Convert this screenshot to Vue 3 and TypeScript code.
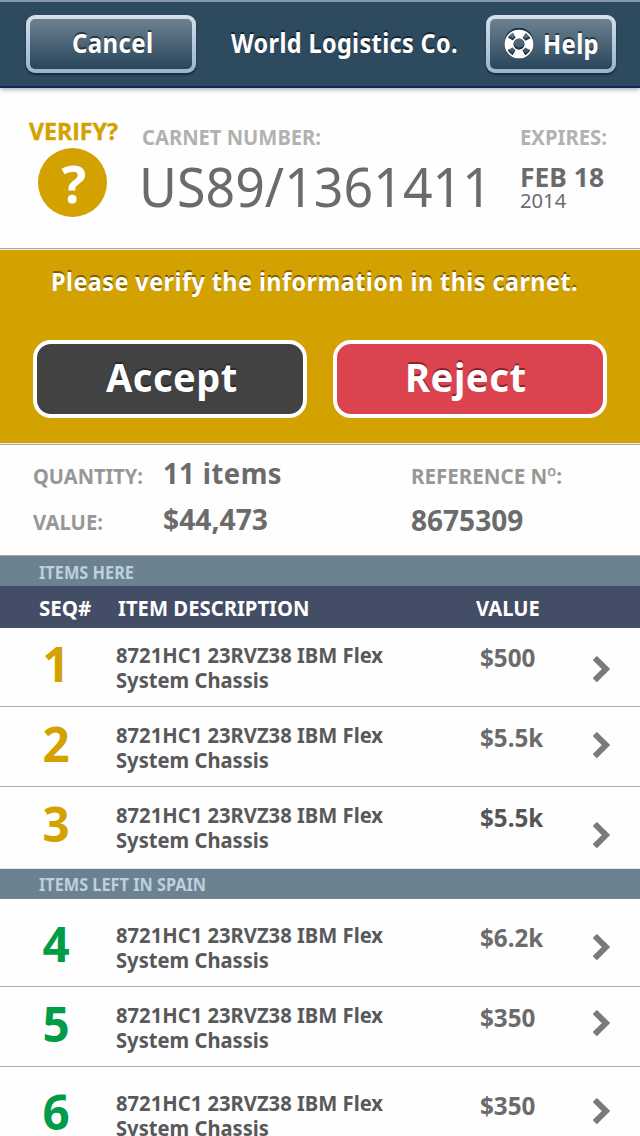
<script setup lang="ts">
interface Item {
  seq: number
  value: string
  width: number
  top: number
  height: number
  arrow: number
  strong?: boolean
}

interface Section {
  title: string
  width: number
  tone: string
  columns: boolean
  items: Item[]
}

const sections: Section[] = [
  {
    title: 'ITEMS HERE',
    width: 95,
    tone: 'gold',
    columns: true,
    items: [
      { seq: 1, value: '$500', width: 55.5, top: 15, height: 79, arrow: 28 },
      { seq: 2, value: '$5.5k', width: 63.3, top: 16, height: 80, arrow: 25 },
      { seq: 3, value: '$5.5k', width: 63.3, top: 16, height: 82, arrow: 35, strong: true },
    ],
  },
  {
    title: 'ITEMS LEFT IN SPAIN',
    width: 167,
    tone: 'green',
    columns: false,
    items: [
      { seq: 4, value: '$6.2k', width: 63.3, top: 24, height: 88, arrow: 35 },
      { seq: 5, value: '$350', width: 55.5, top: 16, height: 80, arrow: 23 },
      { seq: 6, value: '$350', width: 55.5, top: 24, height: 88, arrow: 31 },
    ],
  },
]

// Condenses a label horizontally so that it takes the given width.
const vFit = {
  mounted(el: HTMLElement, binding: { value: number }) {
    const natural = el.getBoundingClientRect().width
    el.style.transform = `scaleX(${binding.value / natural})`
    el.style.marginRight = `${binding.value - natural}px`
  },
}
</script>

<template>
  <div class="screen">
    <header class="bar">
      <button class="nav cancel"><span v-fit="81.5" class="t">Cancel</span></button>
      <h1 class="company"><span v-fit="227" class="t">World Logistics Co.</span></h1>
      <button class="nav help">
        <svg class="ring" viewBox="0 0 30 32" width="30" height="32">
          <g v-for="layer in ['shade', 'face']" :key="layer" :class="layer">
            <circle cx="15" cy="16" r="13.6" class="thin" />
            <circle cx="15" cy="16" r="6.4" class="thin" />
            <circle cx="15" cy="16" r="10" class="thick" />
          </g>
        </svg>
        <span v-fit="56" class="t">Help</span>
      </button>
    </header>

    <section class="carnet">
      <div class="status">
        <span v-fit="89" class="t verify">VERIFY?</span>
        <div class="badge"><span class="mark">?</span></div>
      </div>
      <div class="number">
        <div class="label"><span v-fit="179" class="t">CARNET NUMBER:</span></div>
        <div class="code"><span v-fit="353" class="t">US89/1361411</span></div>
      </div>
      <div class="expires">
        <div class="label"><span v-fit="87" class="t">EXPIRES:</span></div>
        <div class="day"><span v-fit="84" class="t">FEB 18</span></div>
        <div class="year"><span v-fit="46.2" class="t">2014</span></div>
      </div>
    </section>

    <section class="prompt">
      <p class="ask"><span v-fit="527" class="t">Please verify the information in this carnet.</span></p>
      <div class="actions">
        <button class="act accept"><span v-fit="131.7" class="t">Accept</span></button>
        <button class="act reject"><span v-fit="121.5" class="t">Reject</span></button>
      </div>
    </section>

    <section class="summary">
      <div class="key"><span v-fit="110" class="t">QUANTITY:</span></div>
      <div class="val spaced"><span v-fit="119" class="t">11 items</span></div>
      <div class="key ref"><span v-fit="151" class="t">REFERENCE N<span class="ord">º</span>:</span></div>
      <div class="key"><span v-fit="70" class="t">VALUE:</span></div>
      <div class="val"><span v-fit="105" class="t">$44,473</span></div>
      <div class="val refno"><span v-fit="112.3" class="t">8675309</span></div>
    </section>

    <section v-for="section in sections" :key="section.title" :class="section.tone">
      <h2 class="strip"><span v-fit="section.width" class="t">{{ section.title }}</span></h2>
      <div v-if="section.columns" class="columns">
        <div><span v-fit="52.3" class="t">SEQ#</span></div>
        <div><span v-fit="191.5" class="t">ITEM DESCRIPTION</span></div>
        <div><span v-fit="63.8" class="t">VALUE</span></div>
      </div>
      <div
        v-for="item in section.items"
        :key="item.seq"
        class="row"
        :style="{ height: item.height + 'px' }"
      >
        <div class="seq" :style="{ paddingTop: item.top + 'px' }">{{ item.seq }}</div>
        <div class="desc" :style="{ paddingTop: item.top + 'px' }">
          <span v-fit="267" class="t">8721HC1 23RVZ38 IBM Flex</span>
          <span v-fit="153" class="t">System Chassis</span>
        </div>
        <div class="price" :class="{ strong: item.strong }" :style="{ paddingTop: item.top + 'px' }">
          <span v-fit="item.width" class="t">{{ item.value }}</span>
        </div>
        <svg
          class="arrow"
          :style="{ marginTop: item.arrow + 'px' }"
          viewBox="0 0 18 27"
          width="18"
          height="27"
        >
          <path d="M1.8 2 L13 13.1 L1.8 24.2" />
        </svg>
      </div>
    </section>
  </div>
</template>

<style>
body {
  background: #fff;
}
</style>

<style scoped>
.screen {
  width: 640px;
  height: 1136px;
  overflow: hidden;
  background: #fefefe;
  font-family: 'Noto Sans', 'Open Sans', sans-serif;
  font-weight: 700;
  color: #6b6b6b;
}

h1,
h2,
p {
  margin: 0;
  font-size: inherit;
}

button {
  margin: 0;
  padding: 0;
  font: inherit;
  color: inherit;
  text-align: left;
}

.t {
  display: inline-block;
  white-space: nowrap;
  transform-origin: 0 50%;
}

.bar {
  position: relative;
  display: flex;
  align-items: flex-start;
  box-sizing: border-box;
  height: 88px;
  padding: 13px 24px 0 26px;
  border-top: 2px solid #8598a5;
  border-bottom: 2px solid #0e2a60;
  background: #2d4a5f;
  box-shadow: 0 1px 5px rgba(0, 0, 0, 0.4);
  font-size: 26px;
  line-height: 30px;
  letter-spacing: 0.4px;
  color: #fff;
  text-shadow: 0 -2px 0 rgba(0, 0, 0, 0.5);
}

.nav {
  display: flex;
  align-items: flex-start;
  box-sizing: border-box;
  height: 58px;
  border: 4px solid transparent;
  border-radius: 9px;
  background:
    linear-gradient(#6d8291, #29455a) padding-box,
    linear-gradient(#d6e0eb, #94b5d1) border-box;
  box-shadow: 0 2px 2px rgba(0, 0, 0, 0.45);
  letter-spacing: 0.4px;
  line-height: 30px;
  text-shadow: inherit;
}

.cancel {
  width: 170px;
  padding: 9px 0 0 42px;
}

.company {
  flex: 1;
  padding: 13px 0 0 35.2px;
}

.help {
  width: 130px;
  padding: 10px 0 0 14px;
}

.ring {
  flex: none;
  margin: -1px 9px 0 0;
  fill: none;
}

.ring .thin {
  stroke-width: 1.5;
}

.ring .thick {
  stroke-width: 8;
  stroke-dasharray: 10.2 5.508;
  stroke-dashoffset: 5.1;
}

.shade {
  stroke: #1b2f3e;
  transform: translateY(-2px);
}

.face {
  stroke: #fff;
}

.carnet {
  display: grid;
  grid-template-columns: 138.3px 381.7px 1fr;
  box-sizing: border-box;
  height: 162px;
  border-bottom: 1px solid #ededed;
  box-shadow: inset 0 -1px #a9a9a9;
}

.status {
  padding: 28px 0 0 29px;
}

.verify {
  display: block;
  font-family: 'Open Sans', sans-serif;
  font-size: 22.5px;
  line-height: 32px;
  width: max-content;
  color: #d3a100;
  -webkit-text-stroke: 0.4px #d3a100;
}

.badge {
  width: 69px;
  height: 69px;
  margin-left: 9.3px;
  border-radius: 50%;
  background: #d3a100;
  color: #fff;
  text-align: center;
}

.mark {
  display: block;
  padding-left: 2px;
  font-family: 'Open Sans', sans-serif;
  font-size: 52px;
  line-height: 70px;
}

.label {
  height: 30px;
  padding-top: 34px;
  font-size: 21px;
  line-height: 30px;
  color: #b1b1b1;
}

.number .label {
  padding-left: 3.7px;
}

.code {
  padding-left: 0.7px;
  font-size: 55px;
  font-weight: 400;
  line-height: 68px;
}

.day {
  padding-top: 8px;
  font-size: 27px;
  line-height: 34px;
}

.year {
  padding-left: 0.4px;
  font-size: 20px;
  font-weight: 400;
  line-height: 22px;
  margin-top: -4px;
}

.prompt {
  box-sizing: border-box;
  height: 193px;
  padding: 16px 33px 0;
  background: #d3a100;
  color: #fff;
}

.ask {
  padding-left: 18.2px;
  font-size: 25.5px;
  line-height: 31px;
  letter-spacing: 0.5px;
  text-shadow: 0 -2px 0 rgba(70, 50, 0, 0.6);
}

.actions {
  display: flex;
  gap: 26px;
  padding-top: 43px;
}

.act {
  box-sizing: border-box;
  width: 274px;
  height: 78px;
  border: 4px solid #fff;
  border-radius: 18px;
  font-size: 40px;
  line-height: 62px;
  letter-spacing: 0.5px;
}

.accept {
  padding: 0 0 5px 69px;
  background: #424242;
  text-shadow: 0 -2px 0 rgba(0, 0, 0, 0.4);
}

.reject {
  padding: 0 0 5px 68px;
  background: #db444f;
  text-shadow: 0 -2px 0 rgba(60, 0, 10, 0.5);
}

.summary {
  display: grid;
  grid-template-columns: 129.5px 247.9px 1fr;
  grid-template-rows: 46px 46px;
  box-sizing: border-box;
  height: 113px;
  padding: 12px 0 0 33px;
  border-top: 1px solid #ededed;
  border-bottom: 1px solid #a9a9a9;
  box-shadow: inset 0 1px #a9a9a9;
  line-height: 40px;
}

.key {
  padding-top: 1px;
  font-size: 21px;
  line-height: 38px;
  color: #979797;
}

.ref {
  padding-left: 0.5px;
}

.ord {
  position: relative;
  top: 1px;
  font-size: 24px;
  font-weight: 500;
  line-height: 0;
}

.key,
.val {
  height: 40px;
}

.val {
  font-size: 29px;
  line-height: 34px;
}

.spaced {
  letter-spacing: 0.5px;
}

.refno {
  padding: 1px 0 0 0.5px;
}

.strip {
  height: 30px;
  padding-left: 38.9px;
  background: #6d8291;
  font-size: 17px;
  line-height: 33px;
  color: #bdd0de;
}

.green .strip {
  line-height: 32px;
}

.columns {
  display: grid;
  grid-template-columns: 79.2px 358.6px 1fr;
  height: 42px;
  padding-left: 38.7px;
  background: #434d65;
  font-size: 20.5px;
  line-height: 44px;
  color: #fff;
}

.row {
  display: grid;
  grid-template-columns: 115.5px 364px 113.5px 1fr;
  align-items: start;
  box-sizing: border-box;
  border-bottom: 1px solid #adadad;
}

.gold .row:last-child {
  border-bottom-color: #dfe5e9;
}

.seq {
  padding-left: 42.5px;
  font-size: 47.5px;
  line-height: 42px;
}

.gold .seq {
  color: #d3a100;
}

.green .seq {
  color: #009c48;
}

.desc {
  display: grid;
  justify-items: start;
  font-size: 21px;
  line-height: 25px;
  color: #595959;
}

.price {
  font-size: 25px;
  line-height: 29px;
}

.strong {
  color: #555;
}

.arrow path {
  fill: none;
  stroke: #7a7a7a;
  stroke-width: 5.9;
}
</style>
